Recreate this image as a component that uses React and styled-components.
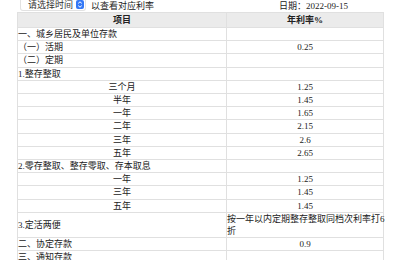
import React from "react";
import styled, { createGlobalStyle } from "styled-components";

const Global = createGlobalStyle`
  body {
    margin: 0;
    background: #fff;
    font-family: "Liberation Serif", "Noto Sans CJK SC", serif;
    color: #222;
  }
`;

const Page = styled.div`
  width: 400px;
  height: 260px;
  overflow: hidden;
  padding-left: 17px;
  box-sizing: border-box;
`;

const TopBar = styled.div`
  display: flex;
  align-items: center;
  height: 12px;
  font-size: 9px;
  line-height: 10px;
`;

const Select = styled.div`
  display: flex;
  align-items: center;
  justify-content: space-between;
  width: 66px;
  height: 11px;
  margin-left: 3px;
  margin-top: -2px;
  padding: 0 1px 0 7px;
  box-sizing: border-box;
  background: #fff;
  border: 1px solid #e2e2e2;
  border-top: none;
  border-radius: 0 0 3px 3px;
  color: #333;
`;

const SelectHint = styled.span`
  margin-left: 5px;
`;

const DateText = styled.span`
  margin-left: auto;
  margin-right: 52px;
`;

const Table = styled.table`
  width: 367px;
  border-collapse: collapse;
  table-layout: fixed;
  font-size: 9px;
  line-height: 12.2px;
  & td,
  & th {
    border: 1px solid #e0e0e0;
    padding: 0;
    vertical-align: middle;
  }
`;

const HeadCell = styled.th`
  background: #ebebeb;
  font-weight: bold;
  line-height: 14px;
  text-align: center;
`;

const Cell = styled.td`
  text-align: ${(p) => (p.center ? "center" : "left")};
  padding-left: ${(p) => (p.center ? "0" : "1px")};
  white-space: nowrap;
  overflow: visible;
`;

const SelectIcon = () => (
  <svg width="8" height="9" viewBox="0 0 8 9">
    <rect x="0" y="0" width="8" height="9" rx="2" fill="#3478f6" />
    <path d="M2.2 3.4 L4 1.8 L5.8 3.4" stroke="#fff" strokeWidth="1" fill="none" />
    <path d="M2.2 5.6 L4 7.2 L5.8 5.6" stroke="#fff" strokeWidth="1" fill="none" />
  </svg>
);

const rows = [
  { name: "一、城乡居民及单位存款", rate: [""] },
  { name: "（一）活期", rate: ["0.25"] },
  { name: "（二）定期", rate: [""] },
  { name: "1.整存整取", rate: [""] },
  { name: "三个月", rate: ["1.25"], sub: true },
  { name: "半年", rate: ["1.45"], sub: true },
  { name: "一年", rate: ["1.65"], sub: true },
  { name: "二年", rate: ["2.15"], sub: true },
  { name: "三年", rate: ["2.6"], sub: true },
  { name: "五年", rate: ["2.65"], sub: true },
  { name: "2.零存整取、整存零取、存本取息", rate: [""] },
  { name: "一年", rate: ["1.25"], sub: true },
  { name: "三年", rate: ["1.45"], sub: true },
  { name: "五年", rate: ["1.45"], sub: true },
  { name: "3.定活两便", rate: ["按一年以内定期整存整取同档次利率打6", "折"], left: true },
  { name: "二、协定存款", rate: ["0.9"] },
  { name: "三、通知存款", rate: [""] },
];

export default function App() {
  return (
    <Page>
      <Global />
      <TopBar>
        <Select>
          请选择时间
          <SelectIcon />
        </Select>
        <SelectHint>以查看对应利率</SelectHint>
        <DateText>日期：2022-09-15</DateText>
      </TopBar>
      <Table>
        <colgroup>
          <col style={{ width: "209px" }} />
          <col />
        </colgroup>
        <thead>
          <tr>
            <HeadCell>项目</HeadCell>
            <HeadCell>年利率%</HeadCell>
          </tr>
        </thead>
        <tbody>
          {rows.map((r, i) => (
            <tr key={i}>
              <Cell center={r.sub}>{r.name}</Cell>
              <Cell center={!r.left}>
                {r.rate.map((line, j) => (
                  <React.Fragment key={j}>
                    {j > 0 && <br />}
                    {line}
                  </React.Fragment>
                ))}
              </Cell>
            </tr>
          ))}
        </tbody>
      </Table>
    </Page>
  );
}
